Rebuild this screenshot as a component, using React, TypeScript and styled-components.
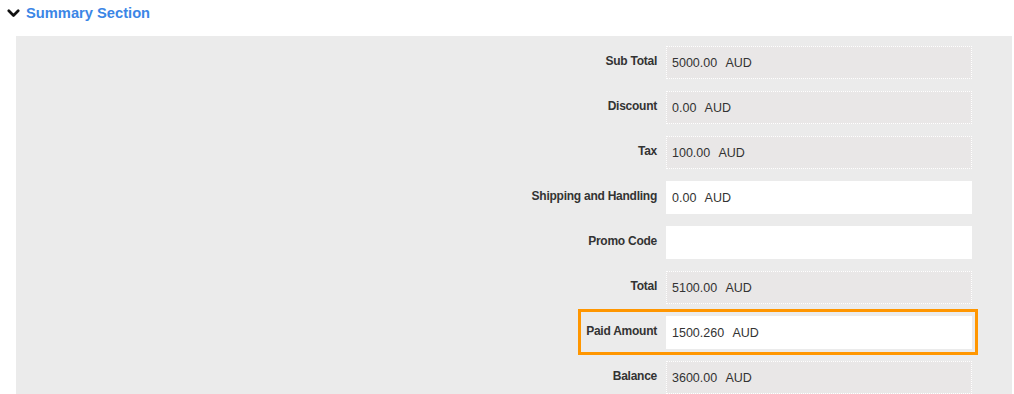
import React from "react";
import styled, { createGlobalStyle } from "styled-components";

const Global = createGlobalStyle`
  html, body { margin: 0; padding: 0; background: #ffffff; }
  body { font-family: "Liberation Sans", Arial, sans-serif; overflow: hidden; }
`;

const Page = styled.div`
  width: 1014px;
`;

const Header = styled.div`
  display: flex;
  align-items: center;
  gap: 6px;
  height: 26px;
  padding-left: 7px;
  padding-bottom: 10px;
`;

const Title = styled.span`
  font-size: 14.7px;
  font-weight: bold;
  color: #3b86e6;
  line-height: 26px;
`;

const Panel = styled.div`
  margin-left: 16px;
  width: 956px;
  background: #ebebeb;
  padding: 10px 40px 40px 0;
  display: flex;
  flex-direction: column;
  gap: 12px;
`;

const Row = styled.div<{ $highlight?: boolean }>`
  position: relative;
  display: grid;
  grid-template-columns: 1fr 306px;
  column-gap: 9px;
  ${(p) =>
    p.$highlight &&
    `
    &::before {
      content: "";
      position: absolute;
      top: -7px;
      bottom: -6px;
      right: -6px;
      width: 394px;
      border: 3px solid #ff9600;
      pointer-events: none;
    }
  `}
`;

const Label = styled.div`
  text-align: right;
  font-size: 12px;
  font-weight: bold;
  letter-spacing: -0.25px;
  color: #333333;
  line-height: 16px;
  padding-top: 7px;
`;

const Field = styled.div<{ $editable?: boolean }>`
  box-sizing: border-box;
  height: 33px;
  padding: 2px 5px 0;
  font-size: 12.5px;
  word-spacing: 1px;
  color: #333333;
  line-height: 29px;
  white-space: pre;
  background: ${(p) => (p.$editable ? "#ffffff" : "#e9e7e7")};
  border: 1px ${(p) => (p.$editable ? "solid #ffffff" : "dotted #ffffff")};
`;

const Chevron = () => (
  <svg width="13" height="12" viewBox="0 0 13 12">
    <path d="M1.8 3.8 L6.5 8.5 L11.2 3.8" fill="none" stroke="#111" strokeWidth="2.7" strokeLinecap="round" strokeLinejoin="round" />
  </svg>
);

type Item = { label: string; value: string; editable?: boolean; highlight?: boolean };

const items: Item[] = [
  { label: "Sub Total", value: "5000.00  AUD" },
  { label: "Discount", value: "0.00  AUD" },
  { label: "Tax", value: "100.00  AUD" },
  { label: "Shipping and Handling", value: "0.00  AUD", editable: true },
  { label: "Promo Code", value: "", editable: true },
  { label: "Total", value: "5100.00  AUD" },
  { label: "Paid Amount", value: "1500.260  AUD", editable: true, highlight: true },
  { label: "Balance", value: "3600.00  AUD" },
];

export default function App() {
  return (
    <Page>
      <Global />
      <Header>
        <Chevron />
        <Title>Summary Section</Title>
      </Header>
      <Panel>
        {items.map((it) => (
          <Row key={it.label} $highlight={it.highlight}>
            <Label>{it.label}</Label>
            <Field $editable={it.editable}>{it.value}</Field>
          </Row>
        ))}
      </Panel>
    </Page>
  );
}
